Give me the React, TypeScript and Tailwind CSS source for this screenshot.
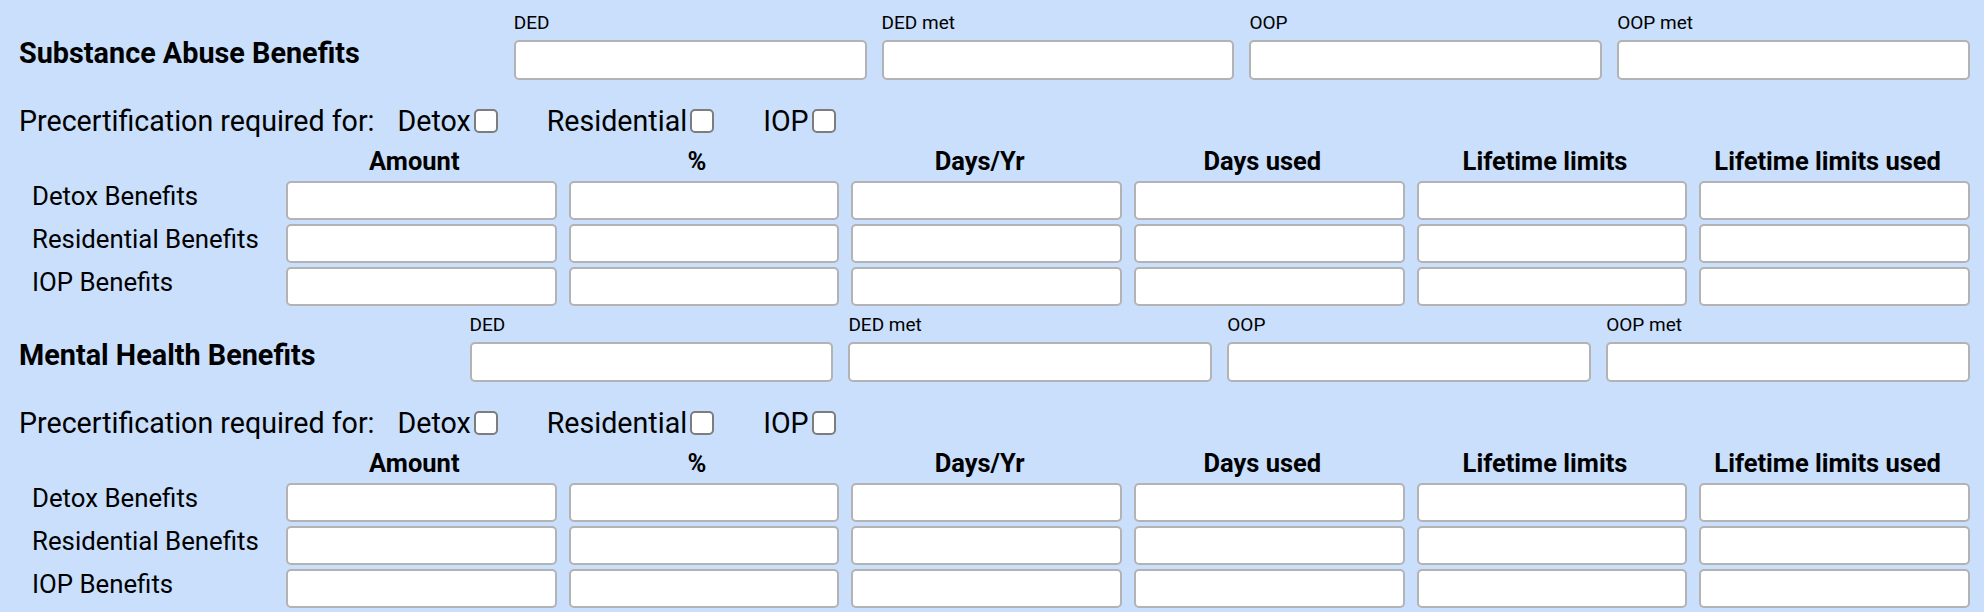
const TOP_FIELDS = ["DED", "DED met", "OOP", "OOP met"];
const COLUMNS = ["Amount", "%", "Days/Yr", "Days used", "Lifetime limits", "Lifetime limits used"];
const ROWS = ["Detox Benefits", "Residential Benefits", "IOP Benefits"];
const PRECERT = ["Detox", "Residential", "IOP"];

function TextBox() {
  return (
    <input
      type="text"
      className="block w-full min-w-0 bg-white border-2 border-[#b3b3b3] rounded-[5px] outline-none"
    />
  );
}

function CheckBox() {
  return (
    <span className="inline-block w-[24px] h-[24px] bg-white border-2 border-[#7d7d7d] rounded-[5px] shrink-0" />
  );
}

function BenefitSection({ title }: { title: string }) {
  return (
    <section className="pt-[9px]">
      {/* Heading + deductible / out of pocket */}
      <div className="flex items-end">
        <h2 className="shrink-0 mb-[10px] text-[28.8px] leading-[34px] font-bold">{title}</h2>
        <div className="flex-1 ml-[154px] grid grid-cols-4 gap-x-[15px]">
          {TOP_FIELDS.map((f) => (
            <div key={f}>
              <div className="text-[19px] leading-[22px]">{f}</div>
              <div className="mt-[6px] h-[40px] flex">
                <input
                  type="text"
                  className="block w-full min-w-0 h-full bg-white border-2 border-[#b3b3b3] rounded-[5px] outline-none"
                />
              </div>
            </div>
          ))}
        </div>
      </div>

      {/* Precertification */}
      <div className="mt-[25px] flex items-center h-[32px] text-[28.6px] leading-[32px]">
        <span>Precertification required for:</span>
        <div className="flex items-center ml-[23px] gap-x-[49px]">
          {PRECERT.map((p) => (
            <label key={p} className="flex items-center">
              <span>{p}</span>
              <span className="ml-[3px] flex items-center">
                <CheckBox />
              </span>
            </label>
          ))}
        </div>
      </div>

      {/* Benefits table */}
      <div className="mt-[10px] grid grid-cols-[255px_repeat(6,minmax(0,1fr))] gap-x-[12px]">
        <div />
        {COLUMNS.map((c) => (
          <div key={c} className="pr-[14px] text-center text-[25.5px] leading-[28px] font-bold whitespace-nowrap">
            {c}
          </div>
        ))}
      </div>
      <div className="mt-[6px] flex flex-col gap-y-[5px]">
        {ROWS.map((r) => (
          <div key={r} className="grid grid-cols-[255px_repeat(6,minmax(0,1fr))] gap-x-[12px] h-[38px]">
            <div className="pl-[13px] pb-[9px] flex items-center text-[25.8px] leading-[30px] whitespace-nowrap">
              {r}
            </div>
            {COLUMNS.map((c) => (
              <div key={c} className="flex">
                <TextBox />
              </div>
            ))}
          </div>
        ))}
      </div>
    </section>
  );
}

export default function App() {
  return (
    <div
      className="min-h-screen bg-[#c9dffc] text-black pt-[3px] pl-[19px] pr-[14px] pb-[8px]"
      style={{ fontFamily: 'Roboto, "Liberation Sans", sans-serif' }}
    >
      <BenefitSection title="Substance Abuse Benefits" />
      <BenefitSection title="Mental Health Benefits" />
    </div>
  );
}
